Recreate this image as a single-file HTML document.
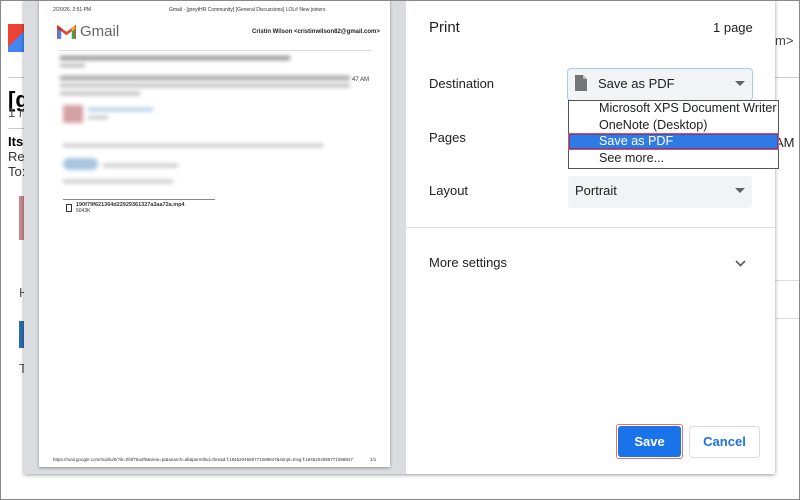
<!DOCTYPE html>
<html><head><style>
*{margin:0;padding:0;box-sizing:border-box}
body{width:800px;height:500px;position:relative;overflow:hidden;background:#fff;font-family:"Liberation Sans",Arial,sans-serif}
.abs{position:absolute}
.t{font-size:13px;color:#202124}
.dd{font-size:12.6px;color:#202124}
.sm{font-size:5px;color:#333;white-space:nowrap}
.blur{filter:blur(2px)}
</style></head><body>
<!-- background gmail bits -->
<div class="abs" style="left:8px;top:24px;width:18px;height:28px;background:linear-gradient(135deg,#ea4335 50%,#4285f4 50%)"></div>
<div class="abs" style="left:8px;top:77px;width:16px;height:1px;background:#ccc"></div>
<div class="abs" style="left:8px;top:87px;font-size:22px;font-weight:bold">[g</div>
<div class="abs" style="left:8px;top:105px;font-size:13px;color:#555">1 n</div>
<div class="abs" style="left:8px;top:128px;width:16px;height:1px;background:#ccc"></div>
<div class="abs" style="left:8px;top:134px;font-size:13px;font-weight:bold">Its</div>
<div class="abs" style="left:8px;top:149px;font-size:13px;color:#333">Re</div>
<div class="abs" style="left:8px;top:164px;font-size:13px;color:#333">To:</div>
<div class="abs" style="left:19px;top:196px;width:6px;height:44px;background:#c9888c"></div>
<div class="abs" style="left:19px;top:285px;font-size:13px;color:#555">H</div>
<div class="abs" style="left:19px;top:321px;width:6px;height:27px;background:#2b6cb0"></div>
<div class="abs" style="left:19px;top:361px;font-size:13px;color:#555">T</div>
<div class="abs" style="left:775px;top:33px;font-size:13px;color:#444">m&gt;</div>
<div class="abs" style="left:775px;top:135px;font-size:13px;color:#222">AM</div>
<div class="abs" style="left:775px;top:77px;width:25px;height:1px;background:#ccc"></div>
<div class="abs" style="left:775px;top:280px;width:25px;height:1px;background:#ddd"></div>
<div class="abs" style="left:775px;top:318px;width:25px;height:1px;background:#ddd"></div>
<!-- dialog -->
<div class="abs" style="left:24px;top:0;width:751px;height:474px;background:#fff;box-shadow:0 1px 4px rgba(0,0,0,.4)"></div>
<div class="abs" style="left:24px;top:0;width:382px;height:474px;background:#dadce0"></div>
<div class="abs" style="left:39px;top:0;width:351px;height:467px;background:#fff;box-shadow:0 1px 3px rgba(0,0,0,.35)"></div>
<!-- page content -->
<div class="abs sm" style="left:53px;top:7px">2/20/26, 2:51 PM</div>
<div class="abs sm" style="left:169px;top:7px">Gmail - [greytHR Community] [General Discussions] LOL# New joiners</div>
<svg class="abs" style="left:57px;top:25px" width="19" height="14" viewBox="0 0 18 13"><path d="M1 13V2l8 6 8-6v11" fill="none" stroke="#ea4335" stroke-width="2.5"/><path d="M1 3v10h3V5z" fill="#4285f4"/><path d="M17 3v10h-3V5z" fill="#34a853"/><path d="M1 2l3 3" stroke="#c5221f" stroke-width="2"/><path d="M17 2l-3 3" stroke="#fbbc04" stroke-width="2"/></svg>
<div class="abs" style="left:80px;top:23px;font-size:15px;color:#666">Gmail</div>
<div class="abs" style="left:252px;top:29px;font-size:6px;font-weight:bold;color:#222;white-space:nowrap">Cristin Wilson &lt;cristinwilson82@gmail.com&gt;</div>
<div class="abs" style="left:58px;top:50px;width:314px;height:1px;background:#ddd"></div>
<div class="abs blur" style="left:60px;top:56px;width:230px;height:4px;background:#888"></div>
<div class="abs blur" style="left:60px;top:64px;width:25px;height:3px;background:#aaa"></div>
<div class="abs blur" style="left:60px;top:76px;width:290px;height:4px;background:#999"></div>
<div class="abs blur" style="left:60px;top:84px;width:290px;height:3px;background:#aaa"></div>
<div class="abs blur" style="left:60px;top:92px;width:80px;height:3px;background:#aaa"></div>
<div class="abs sm" style="left:352px;top:77px;font-size:6px">47 AM</div>
<div class="abs blur" style="left:63px;top:105px;width:20px;height:18px;background:#d4a0a4"></div>
<div class="abs blur" style="left:88px;top:108px;width:65px;height:3px;background:#9cc0e0"></div>
<div class="abs blur" style="left:88px;top:116px;width:20px;height:3px;background:#bbb"></div>
<div class="abs blur" style="left:63px;top:144px;width:260px;height:3px;background:#bbb"></div>
<div class="abs blur" style="left:63px;top:158px;width:35px;height:12px;border-radius:6px;background:#a8c4e0"></div>
<div class="abs blur" style="left:103px;top:164px;width:75px;height:3px;background:#bbb"></div>
<div class="abs blur" style="left:63px;top:180px;width:110px;height:3px;background:#bbb"></div>
<div class="abs" style="left:63px;top:199px;width:152px;height:1px;background:#888"></div>
<div class="abs" style="left:66px;top:204px;width:6px;height:8px;border:1px solid #333"></div>
<div class="abs sm" style="left:76px;top:202px;font-weight:bold;font-size:5.5px">190f79f621364d22929361327a3aa72a.mp4</div>
<div class="abs sm" style="left:76px;top:208px;font-size:5px">5043K</div>
<div class="abs sm" style="left:53px;top:457px;font-size:4.5px">https://mail.google.com/mail/u/0/?ik=0f4f76a2f6&amp;view=pt&amp;search=all&amp;permthid=thread-f:1845204585771088847&amp;simpl=msg-f:1845204585771088847</div>
<div class="abs sm" style="left:370px;top:457px;font-size:4.5px">1/1</div>
<!-- right panel -->
<div class="abs" style="left:429px;top:19px;font-size:15px;color:#202124">Print</div>
<div class="abs t" style="left:713px;top:20px">1 page</div>
<div class="abs t" style="left:429px;top:76px">Destination</div>
<div class="abs" style="left:567px;top:68px;width:186px;height:33px;background:#f1f3f4;border:1px solid #a8c7fa;border-radius:4px"></div>
<svg class="abs" style="left:575px;top:75px" width="12" height="16" viewBox="0 0 12 16"><path d="M0 0h8l4 4v12H0z" fill="#757575"/><path d="M8 0v4h4" fill="#bbb"/></svg>
<div class="abs t" style="left:598px;top:76px">Save as PDF</div>
<svg class="abs" style="left:735px;top:81px" width="10" height="5"><path d="M0 0h10L5 5z" fill="#5f6368"/></svg>
<div class="abs t" style="left:429px;top:130px">Pages</div>
<div class="abs t" style="left:429px;top:183px">Layout</div>
<div class="abs" style="left:568px;top:176px;width:184px;height:32px;background:#f1f3f4;border-radius:4px"></div>
<div class="abs t" style="left:575px;top:183px">Portrait</div>
<svg class="abs" style="left:735px;top:188px" width="10" height="5"><path d="M0 0h10L5 5z" fill="#5f6368"/></svg>
<!-- dropdown -->
<div class="abs" style="left:568px;top:100px;width:211px;height:69px;background:#fff;border:1px solid #555"></div>
<div class="abs dd" style="left:599px;top:101px">Microsoft XPS Document Writer</div>
<div class="abs dd" style="left:599px;top:118px">OneNote (Desktop)</div>
<div class="abs" style="left:568px;top:133px;width:211px;height:17px;background:#2f7be5;border:1px solid #e05060;box-shadow:inset 0 0 0 1px #5a4a9a"></div>
<div class="abs dd" style="left:599px;top:134px;color:#fff">Save as PDF</div>
<div class="abs dd" style="left:599px;top:151px">See more...</div>
<div class="abs" style="left:406px;top:227px;width:369px;height:1px;background:#e0e0e0"></div>
<div class="abs t" style="left:429px;top:255px">More settings</div>
<svg class="abs" style="left:735px;top:260px" width="11" height="7"><path d="M1 1l4.5 4.5L10 1" fill="none" stroke="#5f6368" stroke-width="1.8"/></svg>
<div class="abs" style="left:616px;top:424px;width:67px;height:35px;border:1px solid #e07080;border-radius:3px;padding:1px"><div style="width:100%;height:100%;background:#1a73e8;border-radius:3px;color:#fff;font-weight:bold;font-size:13px;text-align:center;line-height:31px">Save</div></div>
<div class="abs" style="left:689px;top:426px;width:71px;height:32px;border:1px solid #dadce0;border-radius:4px;color:#1a73e8;font-weight:bold;font-size:13px;text-align:center;line-height:30px">Cancel</div>
<div class="abs" style="left:0;top:0;width:800px;height:500px;border:1px solid #888;pointer-events:none"></div>
</body></html>
